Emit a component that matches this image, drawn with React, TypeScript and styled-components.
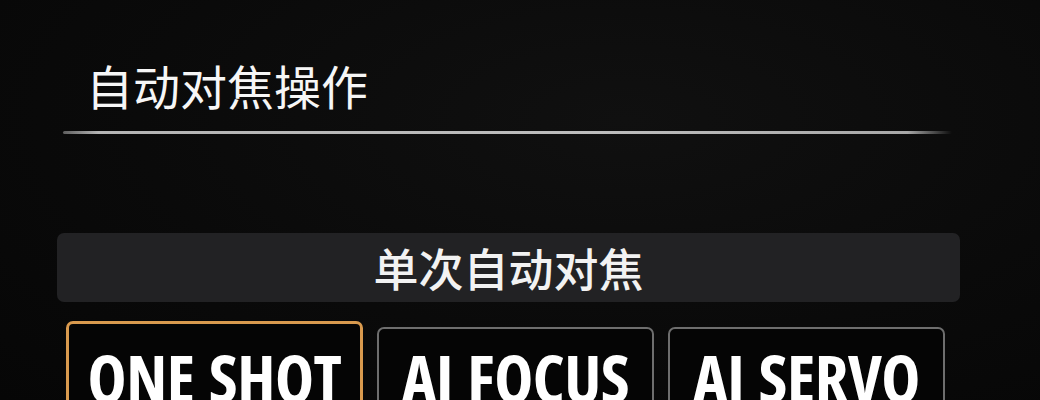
import React from 'react';
import styled, { createGlobalStyle } from 'styled-components';

const GlobalStyle = createGlobalStyle`
  html, body {
    margin: 0;
    padding: 0;
    background: #0a0a0a;
  }
  * {
    box-sizing: border-box;
  }
`;

const modes = [
  { key: 'one', label: 'ONE SHOT' },
  { key: 'focus', label: 'AI FOCUS' },
  { key: 'servo', label: 'AI SERVO' },
];

const App = () => {
  const selected = 'one';

  return (
    <>
      <GlobalStyle />
      <Screen>
        <Title>自动对焦操作</Title>
        <Rule />
        <Banner>单次自动对焦</Banner>
        <ModeRow>
          {modes.map((mode) => (
            <ModeButton key={mode.key} active={mode.key === selected}>
              {mode.label}
            </ModeButton>
          ))}
        </ModeRow>
      </Screen>
    </>
  );
};

export default App;

const Screen = styled.div`
  width: 1040px;
  height: 400px;
  overflow: hidden;
  padding-top: 1px;
  background: radial-gradient(ellipse at 60% 30%, #101010 0%, #0a0a0a 55%, #060606 100%);
  font-family: 'Noto Sans CJK SC', 'Noto Sans', sans-serif;
  color: #f4f4f4;
`;

const Title = styled.h1`
  margin: 52px 0 0 86px;
  height: 64px;
  font-size: 47px;
  font-weight: 400;
  line-height: 64px;
  color: #f6f6f6;
`;

const Rule = styled.div`
  margin: 14px 0 0 63px;
  width: 889px;
  height: 3px;
  border-radius: 2px;
  background: linear-gradient(
    90deg,
    rgba(150, 150, 150, 0.6) 0%,
    #b4b4b4 4%,
    #bdbdbd 60%,
    #a8a8a8 95%,
    rgba(120, 120, 120, 0) 100%
  );
`;

const Banner = styled.div`
  margin: 99px 0 0 57px;
  width: 903px;
  height: 69px;
  border-radius: 7px;
  background: #222224;
  display: flex;
  align-items: center;
  justify-content: center;
  font-size: 45px;
  font-weight: 500;
  color: #f2f2f2;
  line-height: 1;
`;

const ModeRow = styled.div`
  margin: 19px 0 0 66px;
  display: flex;
  align-items: flex-start;
  gap: 14px;
`;

const ModeButton = styled.div<{ active: boolean }>`
  flex: none;
  width: ${({ active }) => (active ? '297px' : '277px')};
  height: 120px;
  margin-top: ${({ active }) => (active ? '0' : '6px')};
  border: ${({ active }) => (active ? '3px solid #d99a4e' : '2px solid #6e6e6e')};
  border-radius: 7px;
  background: #050505;
  display: flex;
  justify-content: center;
  padding-top: ${({ active }) => (active ? '20px' : '15px')};
  font-family: 'Open Sans', 'Noto Sans', sans-serif;
  font-weight: 700;
  font-size: 66px;
  font-stretch: 87.5%;
  line-height: 1;
  letter-spacing: -0.5px;
  word-spacing: 3px;
  color: #ffffff;
  white-space: nowrap;
`;
